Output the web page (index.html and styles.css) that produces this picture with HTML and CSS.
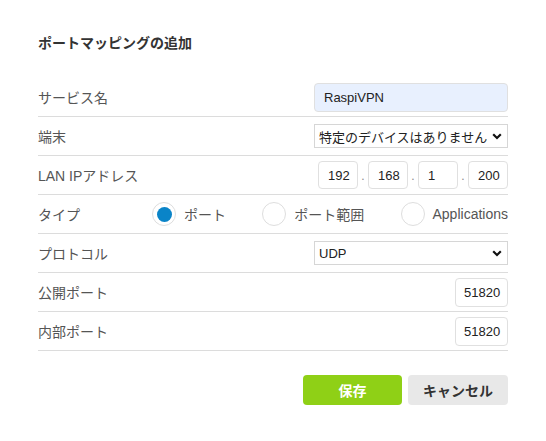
FILE: index.html
```html
<!DOCTYPE html>
<html lang="ja">
<head>
<meta charset="utf-8">
<link rel="stylesheet" href="styles.css">
</head>
<body>
<div class="dialog">
  <h1 class="title">ポートマッピングの追加</h1>
  <div class="form">
    <div class="row">
      <div class="label">サービス名</div>
      <div class="field"><input class="text autofill" type="text" value="RaspiVPN"></div>
    </div>
    <div class="row">
      <div class="label">端末</div>
      <div class="field">
        <div class="select">
          <span class="select-text">特定のデバイスはありません</span>
          <svg class="chev" width="10" height="7" viewBox="0 0 10 7"><path d="M1.2 1.3 L5 5 L8.8 1.3" fill="none" stroke="#111" stroke-width="2.2"/></svg>
        </div>
      </div>
    </div>
    <div class="row">
      <div class="label">LAN IPアドレス</div>
      <div class="field ip">
        <input class="text octet" type="text" value="192"><span class="dot">.</span>
        <input class="text octet" type="text" value="168"><span class="dot">.</span>
        <input class="text octet" type="text" value="1"><span class="dot">.</span>
        <input class="text octet" type="text" value="200">
      </div>
    </div>
    <div class="row">
      <div class="label">タイプ</div>
      <div class="radios">
        <label class="radio"><span class="circle checked"></span><span>ポート</span></label>
        <label class="radio"><span class="circle"></span><span>ポート範囲</span></label>
        <label class="radio"><span class="circle"></span><span>Applications</span></label>
      </div>
    </div>
    <div class="row">
      <div class="label">プロトコル</div>
      <div class="field">
        <div class="select">
          <span class="select-text">UDP</span>
          <svg class="chev" width="10" height="7" viewBox="0 0 10 7"><path d="M1.2 1.3 L5 5 L8.8 1.3" fill="none" stroke="#111" stroke-width="2.2"/></svg>
        </div>
      </div>
    </div>
    <div class="row">
      <div class="label">公開ポート</div>
      <div class="field"><input class="text port" type="text" value="51820"></div>
    </div>
    <div class="row">
      <div class="label">内部ポート</div>
      <div class="field"><input class="text port" type="text" value="51820"></div>
    </div>
  </div>
  <div class="actions">
    <button class="btn save">保存</button>
    <button class="btn cancel">キャンセル</button>
  </div>
</div>
</body>
</html>
```

FILE: styles.css
```css
* { box-sizing: border-box; }
html, body { margin: 0; padding: 0; background: #fff; }
body {
  font-family: "Liberation Sans", Arial, "Noto Sans CJK JP", sans-serif;
  color: #555;
  font-size: 14px;
}
.dialog {
  padding: 35px 38px 0 38px;
  width: 546px;
}
.title {
  margin: 0;
  font-size: 14px;
  line-height: 16px;
  font-weight: bold;
  color: #333;
}
.form {
  margin-top: 27px;
  width: 470px;
}
.row {
  display: flex;
  align-items: center;
  height: 39px;
  border-bottom: 1px solid #dcdcdc;
}
.label {
  width: 114px;
  flex: none;
  font-size: 14px;
  color: #555;
  white-space: nowrap;
}
.field {
  flex: 1;
  display: flex;
  justify-content: flex-end;
  align-items: center;
}
.text {
  font-family: "Liberation Sans", Arial, "Noto Sans CJK JP", sans-serif;
  font-size: 13px;
  color: #222;
  height: 29px;
  border: 1px solid #e0e0e0;
  border-radius: 4px;
  background: #fff;
  padding: 0 2px 0 9px;
  outline: none;
  margin: 0;
}
.autofill {
  width: 194px;
  background: #e8f0fe;
}
.octet {
  width: 40px;
  height: 28px;
}
.dot {
  width: 10px;
  text-align: center;
  color: #888;
  font-size: 12px;
  align-self: flex-end;
  padding-bottom: 6px;
}
.port {
  width: 53px;
  padding: 0 2px 0 8px;
}
.select {
  width: 194px;
  height: 24px;
  border: 1px solid #d6d6d6;
  display: flex;
  align-items: center;
  justify-content: space-between;
  padding: 0 5px 0 4px;
  color: #222;
  font-size: 13px;
  background: #fff;
  white-space: nowrap;
  overflow: hidden;
}
.select-text { overflow: hidden; }
.chev { flex: none; margin-left: 2px; }
.radios {
  flex: 1;
  display: flex;
  justify-content: space-between;
  align-items: center;
}
.radio {
  display: flex;
  align-items: center;
  gap: 8px;
  color: #555;
  font-size: 14px;
}
.circle {
  width: 24px;
  height: 24px;
  border-radius: 50%;
  border: 1px solid #dedede;
  background: #fff;
  display: inline-flex;
  align-items: center;
  justify-content: center;
}
.circle.checked::after {
  content: "";
  width: 15px;
  height: 15px;
  border-radius: 50%;
  background: #0a84c8;
}
.actions {
  width: 470px;
  display: flex;
  justify-content: flex-end;
  gap: 6px;
  margin-top: 24px;
}
.btn {
  height: 30px;
  border: none;
  border-radius: 4px;
  font-family: "Liberation Sans", Arial, "Noto Sans CJK JP", sans-serif;
  font-size: 14px;
  font-weight: bold;
  padding: 0;
}
.save {
  width: 99px;
  background: #8fd016;
  color: #fff;
}
.cancel {
  width: 100px;
  background: #e8e8e8;
  color: #333;
}
```
